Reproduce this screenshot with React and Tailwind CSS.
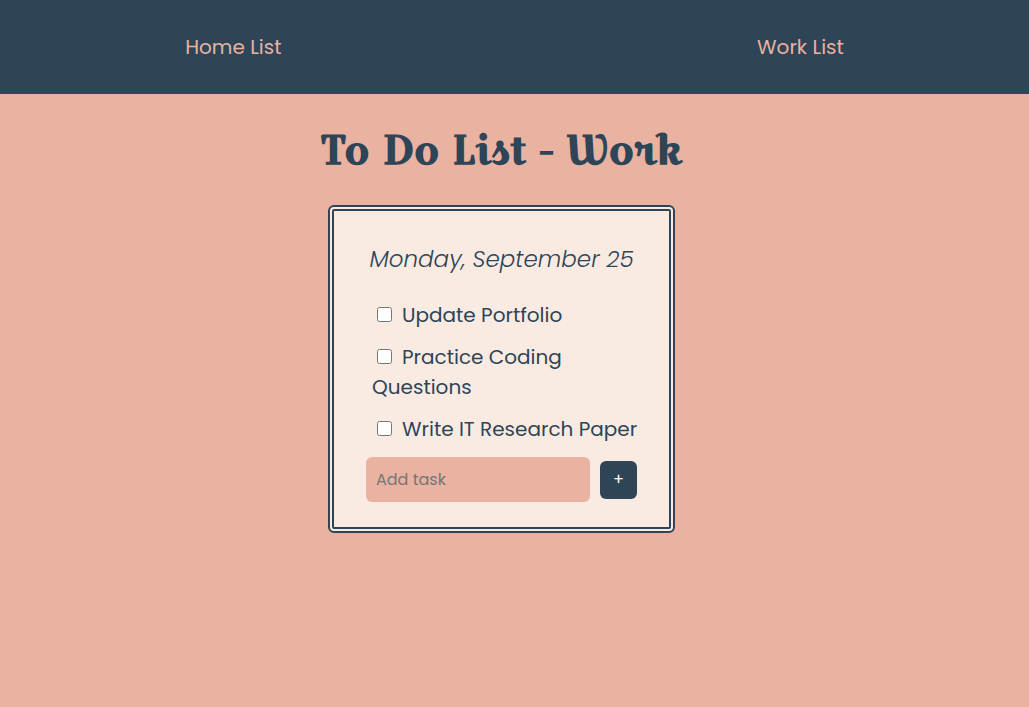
const tasks = ["Update Portfolio", "Practice Coding Questions", "Write IT Research Paper"];

export default function App() {
  return (
    <div className="min-h-screen bg-[#e9b2a1] font-['Poppins','Open_Sans',sans-serif] text-[#2e4457]">
      <nav className="flex h-[94px] items-center justify-between bg-[#2e4457] px-[18%] text-xl text-[#e9b2a1]">
        <a href="#home">Home List</a>
        <a href="#work">Work List</a>
      </nav>
      <main className="flex flex-col items-center pt-7 pr-[26px]">
        <h1 className="font-['Croissant_One','Liberation_Serif',serif] text-[40px] leading-[56px] font-bold whitespace-nowrap">
          To Do List - Work
        </h1>
        <section className="mt-[27px] w-[347px] rounded-md border-[6px] border-double border-[#2e4457] bg-[#faebe2] px-8 pt-[30px] pb-[25px]">
          <h2 className="text-center text-[23px] leading-9 font-light whitespace-nowrap italic">Monday, September 25</h2>
          <ul className="-mr-1 mt-[17px] text-xl leading-[30px]">
            {tasks.map((task) => (
              <li key={task} className="py-1.5 pl-1.5">
                <label>
                  <input type="checkbox" className="mr-2.5 mb-[3px] ml-[5px] size-[15px]" />
                  {task}
                </label>
              </li>
            ))}
          </ul>
          <form className="mt-[7px] flex items-center gap-2.5" onSubmit={(e) => e.preventDefault()}>
            <input
              type="text"
              aria-label="Add task"
              placeholder="Add task"
              className="h-[45px] min-w-0 flex-1 rounded-md bg-[#e9b2a1] px-2.5 text-base placeholder:text-[#757575]"
            />
            <button type="submit" aria-label="Add" className="h-[38px] w-[37px] rounded-md bg-[#2e4457] text-base text-white">
              +
            </button>
          </form>
        </section>
      </main>
    </div>
  );
}
